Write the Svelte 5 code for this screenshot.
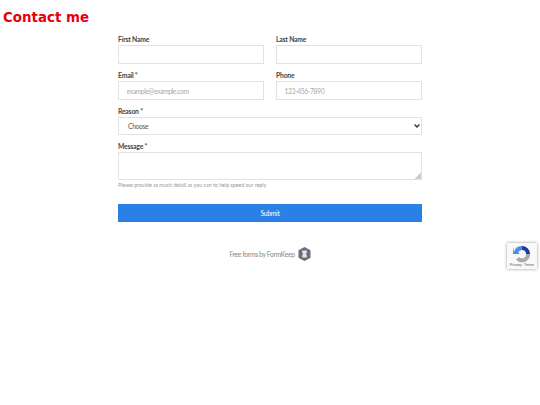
<script>
	let reasons = ["Choose", "Question", "Feedback", "Other"];
</script>

<h1>Contact me</h1>

<form onsubmit={(e) => e.preventDefault()}>
	<div class="row">
		<div class="field">
			<label for="first">First Name</label>
			<input id="first" type="text" />
		</div>
		<div class="field">
			<label for="last">Last Name</label>
			<input id="last" type="text" />
		</div>
	</div>
	<div class="row">
		<div class="field">
			<label for="email">Email *</label>
			<input id="email" type="email" placeholder="example@example.com" />
		</div>
		<div class="field">
			<label for="phone">Phone</label>
			<input id="phone" type="tel" placeholder="123-456-7890" />
		</div>
	</div>
	<div class="field">
		<label for="reason">Reason *</label>
		<div class="select-wrap">
			<select id="reason">
				{#each reasons as r}
					<option>{r}</option>
				{/each}
			</select>
			<svg class="chevron" width="6" height="4" viewBox="0 0 6 4">
				<path d="M0.6 0.6 L3 3 L5.4 0.6" fill="none" stroke="#333" stroke-width="1.4" />
			</svg>
		</div>
	</div>
	<div class="field">
		<label for="message">Message *</label>
		<textarea id="message"></textarea>
		<small>Please provide as much detail as you can to help speed our reply</small>
	</div>
	<button type="submit">Submit</button>
</form>

<div class="powered">
	<span>Free forms by FormKeep</span>
	<svg width="13" height="14" viewBox="0 0 13 14">
		<path d="M6.5 0 L12.5 3.3 V10.7 L6.5 14 L0.5 10.7 V3.3 Z" fill="#6b6f7c" />
		<path d="M4.2 3.5 H8.8 V5.8 L7.8 7 L8.8 8.2 V10.5 H4.2 V8.2 L5.2 7 L4.2 5.8 Z" fill="#e4e5e9" />
	</svg>
</div>

<div class="recaptcha">
	<svg width="18" height="18" viewBox="0 0 18 18">
		<path d="M9 1 A8 8 0 0 1 17 9 H13 A4 4 0 0 0 9 5 Z" fill="#1c3aa9" />
		<path d="M1 7 A8 8 0 0 1 9 1 V5 A4 4 0 0 0 5.2 7.6 L7 9 H0 V2 Z" fill="#4a90e2" />
		<path d="M17 9 A8 8 0 0 1 3 14.5 L6 12 A4 4 0 0 0 13 9 Z" fill="#ababab" />
	</svg>
	<span>Privacy - Terms</span>
</div>

<style>
	:global(body) {
		margin: 0;
		background: #fff;
	}

	h1 {
		margin: 0;
		padding: 9px 0 0 3px;
		font-family: "DejaVu Sans", sans-serif;
		font-size: 13.4px;
		line-height: 17px;
		font-weight: 700;
		color: #e8000d;
	}

	form {
		width: 304px;
		margin: 9px auto 0;
		font-family: "Lato", sans-serif;
	}

	.row {
		display: grid;
		grid-template-columns: 146px 146px;
		gap: 12px;
	}

	.field {
		display: flex;
		flex-direction: column;
		margin-bottom: 7px;
	}

	label {
		padding-top: 1px;
		font-size: 6.8px;
		letter-spacing: -0.2px;
		line-height: 7px;
		font-weight: 700;
		color: #444;
		margin-bottom: 2px;
	}

	input,
	select,
	textarea {
		box-sizing: border-box;
		width: 100%;
		border: 1px solid #e2e2e2;
		border-radius: 0;
		background: #fff;
		outline: none;
		font-family: inherit;
		font-size: 6.8px;
		letter-spacing: -0.4px;
		color: #555;
	}

	input {
		height: 19px;
		padding: 0 7.5px;
	}

	input::placeholder {
		color: #aaa;
		opacity: 1;
	}

	.select-wrap {
		position: relative;
	}

	select {
		display: block;
		height: 18px;
		padding: 0 9px;
		appearance: none;
	}

	.chevron {
		position: absolute;
		right: 2px;
		top: 7px;
	}

	textarea {
		display: block;
		height: 28px;
		padding: 4px 8px;
		resize: vertical;
	}

	textarea::-webkit-resizer {
		background: linear-gradient(135deg, transparent 50%, #ccc 50%) bottom right / 6px 6px no-repeat;
	}

	small {
		margin-top: 2px;
		font-size: 5.4px;
		letter-spacing: -0.05px;
		line-height: 7px;
		color: #999;
	}

	button {
		display: block;
		width: 100%;
		height: 18px;
		margin-top: 15px;
		border: 0;
		background: #2a80e4;
		color: #fff;
		font-family: inherit;
		font-size: 6.8px;
		letter-spacing: -0.3px;
	}

	.powered {
		display: flex;
		justify-content: center;
		align-items: center;
		gap: 3px;
		margin-top: 25px;
		font-family: "Lato", sans-serif;
		font-size: 6.8px;
		letter-spacing: -0.36px;
		color: #888;
	}

	.recaptcha {
		position: absolute;
		top: 243px;
		left: 507px;
		width: 30px;
		height: 26px;
		display: flex;
		flex-direction: column;
		align-items: center;
		justify-content: flex-end;
		box-shadow: 0 0 3px rgba(0, 0, 0, 0.4);
		background: #f9f9f9;
		font-family: "Roboto", sans-serif;
		font-size: 3.5px;
		color: #555;
	}

	.recaptcha span {
		white-space: nowrap;
		margin-bottom: 2px;
	}
</style>
